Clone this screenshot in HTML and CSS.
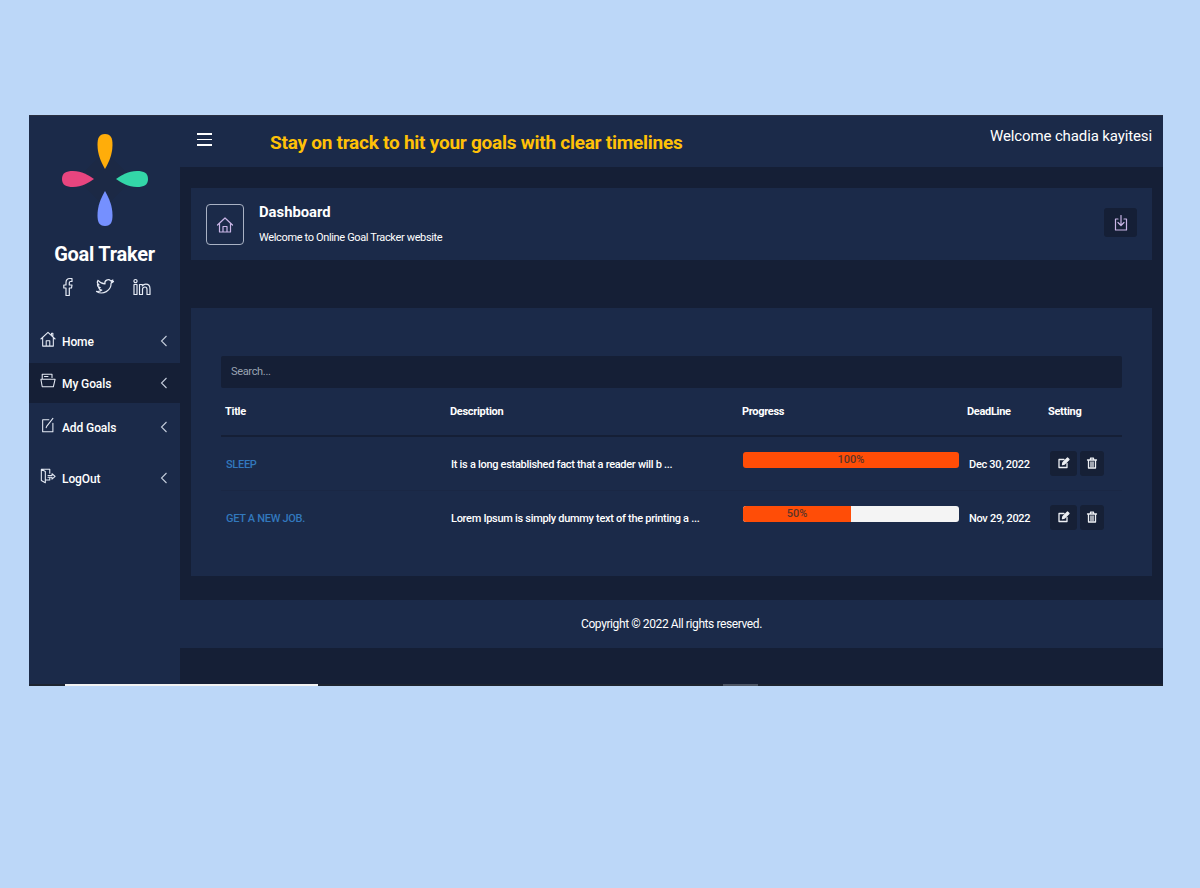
FILE: index.html
```html
<!DOCTYPE html>
<html lang="en">
<head>
  <meta charset="UTF-8" />
  <title>Goal Traker</title>
  <link rel="stylesheet" href="styles.css">
</head>
<body>
  <div class="app">
    <div class="app-row">
      <aside class="sidebar">
        <svg class="logo" viewBox="0 0 86 92" width="86" height="92">
          <polygon points="43,17 71,45 43,73 15,45" fill="#1c2945"/>
          <path d="M43 0c6 0 7.500 4 7.500 11 0 9-3.500 17-7.500 24-4-7-7.500-15-7.500-24 0-7 1.500-11 7.500-11z" fill="#ffad0a"/>
          <path d="M43 92c6 0 7.500-4 7.500-11 0-9-3.500-17-7.500-24-4 7-7.500 15-7.500 24 0 7 1.500 11 7.500 11z" fill="#7590ff"/>
          <path d="M0 45c0-6 4-8 11-8 9 0 15 4 21 8-6 4-12 8-21 8-7 0-11-2-11-8z" fill="#e8457f"/>
          <path d="M86 45c0-6-4-8-11-8-9 0-15 4-21 8 6 4 12 8 21 8 7 0 11-2 11-8z" fill="#33d6a8"/>
        </svg>
        <div class="brand">Goal Traker</div>
        <div class="social">
          <svg class="ico" viewBox="0 0 20 20" width="20" height="20"><path d="M8 18.500V11H5.800V8H8V5.500C8 3 9.300 1.500 11.800 1.500H14V4.500H12.500C11.600 4.500 11.300 5 11.300 5.800V8H14L13.500 11H11.300V18.500z"/></svg>
          <svg class="ico" viewBox="0 0 20 20" width="20" height="20"><path d="M18.500 4.500c-.7.300-1.300.5-2 .5.700-.5 1.200-1.100 1.400-1.900-.7.400-1.400.700-2.200.8a3.300 3.300 0 0 0-5.700 3C7.300 6.800 4.800 5.400 3 3.300c-1 1.600-.5 3.500 1 4.500-.5 0-1-.2-1.500-.4 0 1.600 1.100 3 2.700 3.300-.5.100-1 .1-1.500 0 .4 1.300 1.700 2.300 3.100 2.300A6.700 6.700 0 0 1 1.500 14.400a9.500 9.500 0 0 0 14.600-8.300c.9-.4 1.700-1 2.400-1.600z"/></svg>
          <svg class="ico" viewBox="0 0 20 20" width="20" height="20"><path d="M2 7.500H5V17.500H2zM3.500 2.500a1.600 1.600 0 1 1 0 3.200 1.600 1.600 0 0 1 0-3.200zM7.500 7.500H10.300V9C11 8 12 7.200 13.700 7.200 16.700 7.200 18 9 18 12V17.500H15V12.500C15 11 14.500 10 13 10S10.500 11 10.500 12.500V17.500H7.500z"/></svg>
        </div>
        <nav class="nav">
          <a class="nav-item nav-home">
            <svg class="ico nav-ico" viewBox="0 0 18 18" width="16" height="16"><path d="M1 9L9 1.500 17 9M3 7.500V17H15V7.500M7 17V11H11V17M13 4V2.500H14.500V5.500"/></svg>
            <span class="nav-label">Home</span>
            <svg class="chev" viewBox="0 0 8 12" width="8" height="12"><path d="M6.500 1L1.500 6 6.500 11"/></svg>
          </a>
          <a class="nav-item nav-goals">
            <svg class="ico nav-ico" viewBox="0 0 18 18" width="16" height="16"><path d="M2.500 7V1.500H13.500V5M5 4H9M1 7H17L15 15.500H2.500z"/></svg>
            <span class="nav-label">My Goals</span>
            <svg class="chev" viewBox="0 0 8 12" width="8" height="12"><path d="M6.500 1L1.500 6 6.500 11"/></svg>
          </a>
          <a class="nav-item nav-add">
            <svg class="ico nav-ico" viewBox="0 0 18 18" width="16" height="16"><path d="M10 3H3V16.500H14.500V7M7.500 10.500L14.500 1.500M7 12L7.500 10.500"/></svg>
            <span class="nav-label">Add Goals</span>
            <svg class="chev" viewBox="0 0 8 12" width="8" height="12"><path d="M6.500 1L1.500 6 6.500 11"/></svg>
          </a>
          <a class="nav-item nav-out">
            <svg class="ico nav-ico" viewBox="0 0 18 18" width="16" height="16"><path d="M11 6V1.500H1.500V14L6 16.500V4L1.500 1.500M6 13.500H11V11M9 8.500H13.500V6.500L17 9.500 13.500 12.500V10.500H9"/></svg>
            <span class="nav-label">LogOut</span>
            <svg class="chev" viewBox="0 0 8 12" width="8" height="12"><path d="M6.500 1L1.500 6 6.500 11"/></svg>
          </a>
        </nav>
      </aside>

      <div class="main">
        <header class="topbar">
          <div class="burger"><span></span><span></span><span></span></div>
          <div class="tagline">Stay on track to hit your goals with clear timelines</div>
          <div class="welcome">Welcome chadia kayitesi</div>
        </header>

        <div class="content">
          <section class="page-head">
            <div class="head-icon">
              <svg class="ico-lilac" viewBox="0 0 18 18" width="18" height="18"><path d="M1.500 9L9 2 16.500 9M3.500 7.500V16H14.500V7.500M7 16V10.500H11V16"/></svg>
            </div>
            <div class="head-text">
              <div class="head-title">Dashboard</div>
              <div class="head-sub">Welcome to Online Goal Tracker website</div>
            </div>
            <button class="head-btn">
              <svg class="ico-lilac" viewBox="0 0 16 16" width="16" height="16"><path d="M5 4H2.500V15H13.500V4H11M8 0.500V10M5 7.500L8 10.500 11 7.500"/></svg>
            </button>
          </section>

          <section class="panel">
            <div class="search">Search...</div>
            <table class="goals">
              <thead>
                <tr>
                  <th class="c-title">Title</th>
                  <th class="c-desc">Description</th>
                  <th class="c-prog">Progress</th>
                  <th class="c-date">DeadLine</th>
                  <th class="c-set">Setting</th>
                </tr>
              </thead>
              <tbody>
                <tr>
                  <td class="goal-name">SLEEP</td>
                  <td class="goal-desc">It is a long established fact that a reader will b ...</td>
                  <td><div class="bar"><div class="bar-fill" style="width:100%">100%</div></div></td>
                  <td class="goal-date">Dec 30, 2022</td>
                  <td class="goal-set">
                    <div class="actions">
                      <button class="act act-edit"><svg class="ico-act" viewBox="0 0 12 12" width="12" height="12"><path d="M9 6.500V10.500H1V2.500H6"/><path class="solid" d="M4.500 7.500L5 5.500 9.500 1 11 2.500 6.500 7z"/></svg></button>
                      <button class="act"><svg class="ico-act" viewBox="0 0 12 12" width="12" height="12"><path d="M1.500 3H10.500M4.500 3V1.200H7.500V3M2.500 3V11H9.500V3M5 5V9.500M7 5V9.500"/></svg></button>
                    </div>
                  </td>
                </tr>
                <tr>
                  <td class="goal-name">GET A NEW JOB.</td>
                  <td class="goal-desc">Lorem Ipsum is simply dummy text of the printing a ...</td>
                  <td><div class="bar"><div class="bar-fill" style="width:50%">50%</div></div></td>
                  <td class="goal-date">Nov 29, 2022</td>
                  <td class="goal-set">
                    <div class="actions">
                      <button class="act act-edit"><svg class="ico-act" viewBox="0 0 12 12" width="12" height="12"><path d="M9 6.500V10.500H1V2.500H6"/><path class="solid" d="M4.500 7.500L5 5.500 9.500 1 11 2.500 6.500 7z"/></svg></button>
                      <button class="act"><svg class="ico-act" viewBox="0 0 12 12" width="12" height="12"><path d="M1.500 3H10.500M4.500 3V1.200H7.500V3M2.500 3V11H9.500V3M5 5V9.500M7 5V9.500"/></svg></button>
                    </div>
                  </td>
                </tr>
              </tbody>
            </table>
          </section>
        </div>

        <footer class="footer">Copyright © 2022 All rights reserved.</footer>
      </div>
    </div>
    <div class="hbar">
      <div class="hbar-white"></div>
      <div class="hbar-thumb"></div>
    </div>
  </div>
</body>
</html>
```

FILE: styles.css
```css
* {
  box-sizing: border-box;
}

html, body {
  height: 100%;
}

body {
  margin: 0;
  padding: 115px 37px 0 29px;
  background: #bcd7f8;
  font-family: Roboto, "Liberation Sans", sans-serif;
  color: #fff;
  overflow: hidden;
}

.app {
  width: 1134px;
  height: 571px;
  display: flex;
  flex-direction: column;
  background: #151f36;
  border-top: 1px solid #2a3042;
}

.app-row {
  flex: 1;
  display: flex;
  min-height: 0;
}

/* sidebar */
.sidebar {
  width: 151px;
  flex: none;
  background: #1b2a49;
  padding-top: 18px;
  display: flex;
  flex-direction: column;
  align-items: center;
}

.logo {
  display: block;
  margin-left: 1px;
}

.brand {
  margin-top: 16px;
  font-size: 20px;
  line-height: 24px;
  font-weight: 700;
  letter-spacing: -0.25px;
}

.social {
  margin-top: 11px;
  display: flex;
  gap: 17px;
  margin-left: 1px;
}

.ico, .ico-lilac, .ico-act {
  display: block;
  fill: none;
  stroke-width: 1.2;
  stroke-linejoin: round;
  stroke-linecap: round;
}

.ico {
  stroke: #e6ebf5;
}

.ico-lilac {
  stroke: #c9b5e6;
}

.ico-act {
  stroke: #eef0f4;
  stroke-width: 1.3;
}

.ico-act .solid {
  fill: #eef0f4;
}

.nav {
  width: 100%;
  margin-top: 23px;
}

.nav-item {
  display: flex;
  align-items: center;
  padding: 0 12px 0 11px;
  font-size: 12px;
  font-weight: 500;
  letter-spacing: -0.1px;
}

.nav-home {
  height: 43px;
  padding-bottom: 2px;
}

.nav-goals {
  height: 40px;
  background: #151f36;
}

.nav-add {
  height: 44px;
  padding-top: 4px;
}

.nav-out {
  height: 40px;
  margin-top: 11px;
}

.nav-ico {
  flex: none;
  margin-top: -4px;
}

.nav-label {
  flex: 1;
  margin: 2px 0 0 6px;
}

.chev {
  fill: none;
  stroke: #c4ccdb;
  stroke-width: 1.1;
}

/* top bar */
.main {
  flex: 1;
  min-width: 0;
  display: flex;
  flex-direction: column;
}

.topbar {
  height: 51px;
  flex: none;
  background: #1b2a49;
  display: flex;
  align-items: flex-start;
  padding: 0 11px 0 17px;
}

.burger {
  width: 15px;
  margin-top: 17px;
  display: flex;
  flex-direction: column;
  gap: 4px;
}

.burger span {
  display: block;
  height: 1.500px;
  background: #fff;
}

.tagline {
  margin: 15px 0 0 58px;
  font-size: 19px;
  line-height: 24px;
  font-weight: 700;
  letter-spacing: -0.25px;
  color: #ffc107;
}

.welcome {
  margin: 10px 0 0 auto;
  font-size: 15px;
  line-height: 20px;
  letter-spacing: -0.12px;
}

/* content */
.content {
  padding: 21px 11px 24px;
}

.page-head {
  height: 72px;
  background: #1b2a49;
  display: flex;
  align-items: center;
  padding: 0 15px;
}

.head-icon {
  width: 38px;
  height: 41px;
  border: 1px solid #a9b2c4;
  border-radius: 4px;
  display: flex;
  align-items: center;
  justify-content: center;
  margin-top: 1px;
}

.head-text {
  flex: 1;
  margin: -2px 0 0 15px;
}

.head-title {
  font-size: 14.800px;
  line-height: 20px;
  font-weight: 700;
}

.head-sub {
  margin-top: 9px;
  font-size: 11px;
  line-height: 14px;
  letter-spacing: -0.35px;
}

.head-btn {
  width: 33px;
  height: 29px;
  margin-top: -3px;
  padding: 0;
  border: none;
  border-radius: 3px;
  background: #151f36;
  display: flex;
  align-items: center;
  justify-content: center;
}

.panel {
  margin-top: 48px;
  height: 268px;
  background: #1b2a49;
  padding: 48px 30px 0;
}

.search {
  height: 32px;
  background: #151f36;
  border-radius: 2px;
  padding-left: 10px;
  font-size: 11px;
  letter-spacing: -0.33px;
  line-height: 32px;
  color: #9aa3b2;
}

/* goals table */
.goals {
  width: 100%;
  table-layout: fixed;
  border-collapse: collapse;
  font-size: 11px;
  font-weight: 500;
  letter-spacing: -0.3px;
}

.goals th {
  height: 48px;
  padding: 0 0 0 4px;
  text-align: left;
  font-weight: 700;
  border-bottom: 2px solid #151f36;
}

.goals td {
  height: 54px;
  padding: 2px 0 0 5px;
  white-space: nowrap;
  border-bottom: 1px solid #1a2744;
}

.goals tr:last-child td {
  border-bottom: none;
}

.c-title { width: 225px; }
.c-desc { width: 292px; }
.c-prog { width: 225px; }
.c-date { width: 81px; }

.goals td.goal-name {
  color: #3278bd;
}

.goals td.goal-desc {
  padding-left: 5px;
}

.goals td.goal-date {
  padding-left: 6px;
}

.bar {
  width: 216px;
  height: 16px;
  margin-top: -8px;
  background: #f4f4f4;
  border-radius: 3px;
  overflow: hidden;
}

.bar-fill {
  height: 100%;
  background: #ff4d07;
  color: #5b3428;
  text-align: center;
  line-height: 15px;
  font-size: 11px;
  letter-spacing: 0;
}

.goals td.goal-set {
  padding-left: 6px;
}

.actions {
  display: flex;
  gap: 3px;
  margin-top: -2px;
}

.act {
  width: 24px;
  height: 25px;
  padding: 0;
  border: none;
  border-radius: 3px;
  background: #162036;
  display: flex;
  align-items: center;
  justify-content: center;
}

.act-edit {
  width: 27px;
}

.footer {
  height: 48px;
  flex: none;
  background: #1b2a49;
  text-align: center;
  font-size: 12px;
  letter-spacing: -0.4px;
  line-height: 48px;
}

.hbar {
  height: 2px;
  flex: none;
  background: #1d2430;
  display: flex;
}

.hbar-white {
  width: 253px;
  margin-left: 36px;
  background: #f2f2f2;
}

.hbar-thumb {
  width: 35px;
  margin-left: 405px;
  background: #4d5563;
}
```
